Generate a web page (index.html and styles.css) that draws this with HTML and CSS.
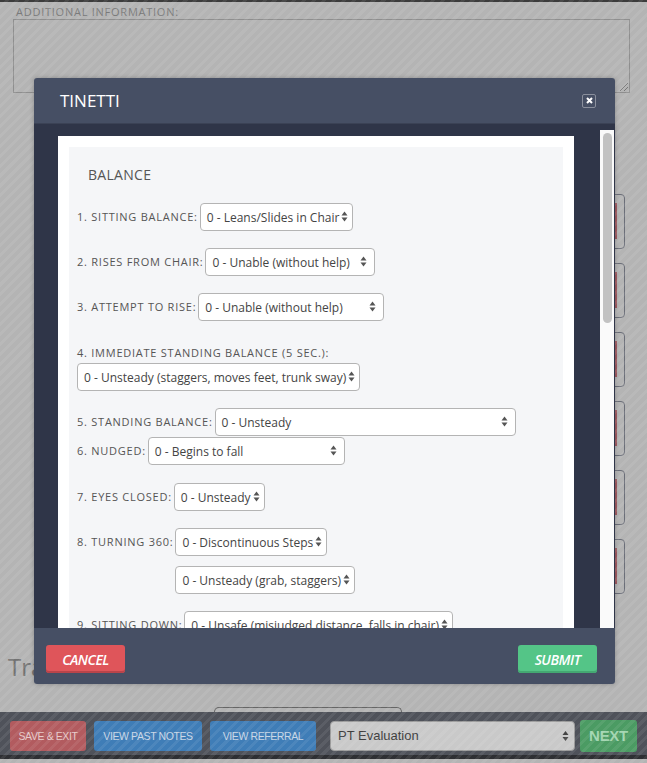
FILE: index.html
```html
<!DOCTYPE html>
<html>
<head>
<meta charset="utf-8">
<link rel="stylesheet" href="styles.css">
</head>
<body>
<div class="page">
  <div class="topline"></div>
  <div class="info">
    <div class="info-label">Additional Information:</div>
    <div class="textarea"><span class="grip"></span></div>
  </div>
  <div class="cards">
    <div class="card"><span class="accent"></span></div>
    <div class="card"><span class="accent"></span></div>
    <div class="card"><span class="accent"></span></div>
    <div class="card"><span class="accent"></span></div>
    <div class="card"><span class="accent"></span></div>
    <div class="card"><span class="accent"></span></div>
  </div>
  <div class="heading">Tra</div>
  <div class="tab"></div>
  <div class="bottombar">
    <span class="bb-btn bb-red">SAVE &amp; EXIT</span>
    <span class="bb-btn bb-blue bb-notes">VIEW PAST NOTES</span>
    <span class="bb-btn bb-blue bb-ref">VIEW REFERRAL</span>
    <span class="bb-select">PT Evaluation
      <svg class="bb-arrow" width="7" height="12" viewBox="0 0 7 12"><path d="M3.5 1 L6.5 5 L0.5 5 Z M3.5 11 L6.5 7 L0.5 7 Z" fill="#444"/></svg>
    </span>
    <span class="bb-btn bb-green">NEXT</span>
  </div>
  <div class="bottomedge"></div>
</div>

<div class="overlay"></div>

<div class="modal">
  <div class="modal-header">
    <h2 class="modal-title">TINETTI</h2>
    <span class="close"><svg width="7" height="7" viewBox="0 0 7 7"><path d="M1 1 L6 6 M6 1 L1 6" stroke="#fff" stroke-width="2"/></svg></span>
  </div>
  <div class="modal-body">
    <div class="scroll-content">
      <div class="panel">
        <div class="inner">
          <h3 class="section">BALANCE</h3>

          <div class="row">
            <span class="label">1. Sitting Balance:</span>
            <span class="sel">0 - Leans/Slides in Chair<svg class="arr" width="7" height="11" viewBox="0 0 7 11"><path d="M3.5 0.5 L6.5 4.5 L0.5 4.5 Z M3.5 10.5 L6.5 6.5 L0.5 6.5 Z" fill="#555"/></svg></span>
          </div>

          <div class="row">
            <span class="label">2. Rises from chair:</span>
            <span class="sel w170">0 - Unable (without help)<svg class="arr" width="7" height="11" viewBox="0 0 7 11"><path d="M3.5 0.5 L6.5 4.5 L0.5 4.5 Z M3.5 10.5 L6.5 6.5 L0.5 6.5 Z" fill="#555"/></svg></span>
          </div>

          <div class="row">
            <span class="label">3. Attempt to rise:</span>
            <span class="sel w186">0 - Unable (without help)<svg class="arr" width="7" height="11" viewBox="0 0 7 11"><path d="M3.5 0.5 L6.5 4.5 L0.5 4.5 Z M3.5 10.5 L6.5 6.5 L0.5 6.5 Z" fill="#555"/></svg></span>
          </div>

          <div class="stack">
            <span class="label">4. Immediate standing balance (5 sec.):</span>
            <span class="sel">0 - Unsteady (staggers, moves feet, trunk sway)<svg class="arr" width="7" height="11" viewBox="0 0 7 11"><path d="M3.5 0.5 L6.5 4.5 L0.5 4.5 Z M3.5 10.5 L6.5 6.5 L0.5 6.5 Z" fill="#555"/></svg></span>
          </div>

          <div class="row tight">
            <span class="label">5. Standing balance:</span>
            <span class="sel w301">0 - Unsteady<svg class="arr" width="7" height="11" viewBox="0 0 7 11"><path d="M3.5 0.5 L6.5 4.5 L0.5 4.5 Z M3.5 10.5 L6.5 6.5 L0.5 6.5 Z" fill="#555"/></svg></span>
          </div>

          <div class="row loose">
            <span class="label">6. Nudged:</span>
            <span class="sel w197">0 - Begins to fall<svg class="arr" width="7" height="11" viewBox="0 0 7 11"><path d="M3.5 0.5 L6.5 4.5 L0.5 4.5 Z M3.5 10.5 L6.5 6.5 L0.5 6.5 Z" fill="#555"/></svg></span>
          </div>

          <div class="row">
            <span class="label">7. Eyes closed:</span>
            <span class="sel">0 - Unsteady<svg class="arr" width="7" height="11" viewBox="0 0 7 11"><path d="M3.5 0.5 L6.5 4.5 L0.5 4.5 Z M3.5 10.5 L6.5 6.5 L0.5 6.5 Z" fill="#555"/></svg></span>
          </div>

          <div class="row pair">
            <span class="label">8. Turning 360:</span>
            <div class="sel-col">
              <span class="sel">0 - Discontinuous Steps<svg class="arr" width="7" height="11" viewBox="0 0 7 11"><path d="M3.5 0.5 L6.5 4.5 L0.5 4.5 Z M3.5 10.5 L6.5 6.5 L0.5 6.5 Z" fill="#555"/></svg></span>
              <span class="sel">0 - Unsteady (grab, staggers)<svg class="arr" width="7" height="11" viewBox="0 0 7 11"><path d="M3.5 0.5 L6.5 4.5 L0.5 4.5 Z M3.5 10.5 L6.5 6.5 L0.5 6.5 Z" fill="#555"/></svg></span>
            </div>
          </div>

          <div class="row">
            <span class="label">9. Sitting down:</span>
            <span class="sel">0 - Unsafe (misjudged distance, falls in chair)<svg class="arr" width="7" height="11" viewBox="0 0 7 11"><path d="M3.5 0.5 L6.5 4.5 L0.5 4.5 Z M3.5 10.5 L6.5 6.5 L0.5 6.5 Z" fill="#555"/></svg></span>
          </div>
        </div>
      </div>
    </div>
    <div class="scrollbar"><div class="thumb"></div></div>
  </div>
  <div class="modal-footer">
    <button class="btn btn-cancel">CANCEL</button>
    <button class="btn btn-submit">SUBMIT</button>
  </div>
</div>
</body>
</html>
```

FILE: styles.css
```css
* { box-sizing: border-box; }
html, body { margin: 0; padding: 0; }
body {
  width: 647px;
  height: 763px;
  overflow: hidden;
  background: #b4b4b4;
  font-family: "Open Sans", "Liberation Sans", sans-serif;
  position: relative;
}

/* ---------- underlying page ---------- */
.page {
  height: 763px;
  display: flex;
  flex-direction: column;
}
.topline {
  height: 2px;
  background: #3c3c3c;
}
.info {
  padding: 3px 17px 0 13px;
}
.info-label {
  font-size: 11px;
  line-height: 13px;
  color: #7a7a7a;
  text-transform: uppercase;
  letter-spacing: 0.75px;
  padding-left: 3px;
}
.textarea {
  margin-top: 1px;
  height: 74px;
  border: 1px solid #8e8e8e;
  position: relative;
}
.grip {
  position: absolute;
  right: 1px;
  bottom: 1px;
  width: 8px;
  height: 8px;
  background: linear-gradient(135deg, transparent 0 45%, #777 45% 52%, transparent 52% 70%, #777 70% 77%, transparent 77%);
}
.cards {
  margin-top: 101px;
  margin-left: 560px;
  width: 65px;
  display: flex;
  flex-direction: column;
  gap: 14px;
}
.card {
  height: 55px;
  border: 1px solid #6b6e78;
  border-radius: 4px;
  position: relative;
}
.accent {
  position: absolute;
  left: 54px;
  top: 8px;
  width: 2px;
  height: 36px;
  background: #a05a60;
}
.heading {
  margin-top: 58px;
  padding-left: 8px;
  font-size: 24px;
  line-height: 30px;
  color: #727272;
}
.tab {
  margin-top: 25px;
  margin-left: 214px;
  width: 188px;
  height: 5px;
  border: 1px solid #666;
  border-bottom: none;
  border-radius: 5px 5px 0 0;
}
.bottombar {
  height: 43px;
  background: #4f525a;
  display: flex;
  align-items: center;
  padding: 4px 10px 0 10px;
  font-family: "Liberation Sans", Arial, sans-serif;
}
.bottomedge {
  height: 4px;
  background: #2e2f33;
}
.bb-btn {
  height: 30px;
  border-radius: 3px;
  display: flex;
  align-items: center;
  justify-content: center;
  font-size: 10.5px;
  letter-spacing: -0.4px;
  font-weight: 400;
}
.bb-red { width: 76px; background: #b25b5f; color: #e6caca; }
.bb-blue { background: #3f7db7; color: #c8d6e6; }
.bb-notes { width: 108px; margin-left: 8px; }
.bb-ref { width: 106px; margin-left: 8px; }
.bb-select {
  margin-left: 14px;
  width: 245px;
  height: 30px;
  border-radius: 4px;
  background: #c9c9c9;
  border: 1px solid #9a9a9a;
  color: #3e3e3e;
  font-size: 13px;
  display: flex;
  align-items: center;
  padding-left: 7px;
  position: relative;
}
.bb-arrow { position: absolute; right: 5px; top: 8px; }
.bb-green {
  margin-left: 5px;
  width: 57px;
  height: 32px;
  background: #4b9b63;
  color: #a2d5b0;
  font-size: 15px;
  font-weight: 700;
  letter-spacing: -0.3px;
}

/* ---------- overlay ---------- */
.overlay {
  position: absolute;
  left: 0; top: 0;
  width: 647px;
  height: 763px;
  background: repeating-linear-gradient(135deg, rgba(255,255,255,0) 0 4px, rgba(255,255,255,0.07) 4px 7px);
}

/* ---------- modal ---------- */
.modal {
  position: absolute;
  left: 34px;
  top: 78px;
  width: 581px;
  height: 606px;
  border-radius: 3px;
  overflow: hidden;
  display: flex;
  flex-direction: column;
  box-shadow: 0 0 4px rgba(0,0,0,0.25);
}
.modal-header {
  height: 46px;
  background: #464f64;
  display: flex;
  align-items: center;
  justify-content: space-between;
  padding: 0 19px 0 26px;
  border-bottom: 1px solid #3b4255;
}
.modal-title {
  margin: 0;
  font-size: 17px;
  font-weight: 400;
  color: #ffffff;
  letter-spacing: 0;
  line-height: 24px;
}
.close {
  width: 14px;
  height: 14px;
  border: 1px solid #8a8f9c;
  border-radius: 2px;
  display: flex;
  align-items: center;
  justify-content: center;
}
.modal-body {
  height: 504px;
  background: #2f3548;
  display: flex;
  padding-left: 24px;
  overflow: hidden;
}
.scroll-content {
  padding-top: 12px;
  width: 542px;
}
.panel {
  width: 516px;
  background: #ffffff;
  padding: 11px 11px 0 11px;
}
.inner {
  background: #f5f6f8;
  padding: 18px 8px 20px 8px;
}
.section {
  margin: 0 0 18px 11px;
  font-size: 14px;
  font-weight: 400;
  line-height: 20px;
  color: #555;
  letter-spacing: 0.3px;
}
.row {
  display: flex;
  align-items: center;
  gap: 2px;
  margin-bottom: 17px;
}
.row.tight { margin-bottom: 1px; }
.row.loose { margin-bottom: 18px; }
.row.pair { align-items: flex-start; }
.row.pair .label { margin-top: 6px; }
.sel-col {
  display: flex;
  flex-direction: column;
  align-items: flex-start;
  gap: 10px;
}
.stack {
  display: flex;
  flex-direction: column;
  align-items: flex-start;
  gap: 2px;
  margin-top: 24px;
  margin-bottom: 17px;
}
.label {
  font-size: 11px;
  line-height: 16px;
  color: #555;
  text-transform: uppercase;
  letter-spacing: 0.75px;
  white-space: nowrap;
}
.sel {
  height: 28px;
  display: inline-flex;
  align-items: center;
  justify-content: space-between;
  gap: 2px;
  padding: 0 4px 0 6px;
  border: 1px solid #b4b4b4;
  border-radius: 4px;
  background: #ffffff;
  font-size: 12px;
  color: #444;
  white-space: nowrap;
}
.arr { flex: none; margin-top: -1px; }
.w170 { width: 170px; padding-right: 7px; }
.w186 { width: 186px; padding-right: 7px; }
.w301 { width: 301px; padding-right: 7px; }
.w197 { width: 197px; padding-right: 7px; }

.scrollbar {
  width: 14px;
  margin-top: 6px;
  background: #fafafa;
  padding: 3px 2px 0 3px;
}
.thumb {
  width: 9px;
  height: 190px;
  border-radius: 5px;
  background: #c2c2c2;
}
.modal-footer {
  height: 56px;
  background: #464f64;
  display: flex;
  justify-content: space-between;
  align-items: flex-start;
  padding: 17px 18px 0 12px;
}
.btn {
  width: 79px;
  height: 28px;
  border: none;
  border-radius: 3px;
  font-family: "Open Sans", "Liberation Sans", sans-serif;
  font-style: italic;
  font-weight: 600;
  font-size: 14px;
  letter-spacing: -0.5px;
  color: #ffffff;
  padding: 0;
}
.btn-cancel { background: #df555a; box-shadow: inset 0 -2px 0 #b9444a; }
.btn-submit { background: #54c587; box-shadow: inset 0 -2px 0 #44a872; }
```
